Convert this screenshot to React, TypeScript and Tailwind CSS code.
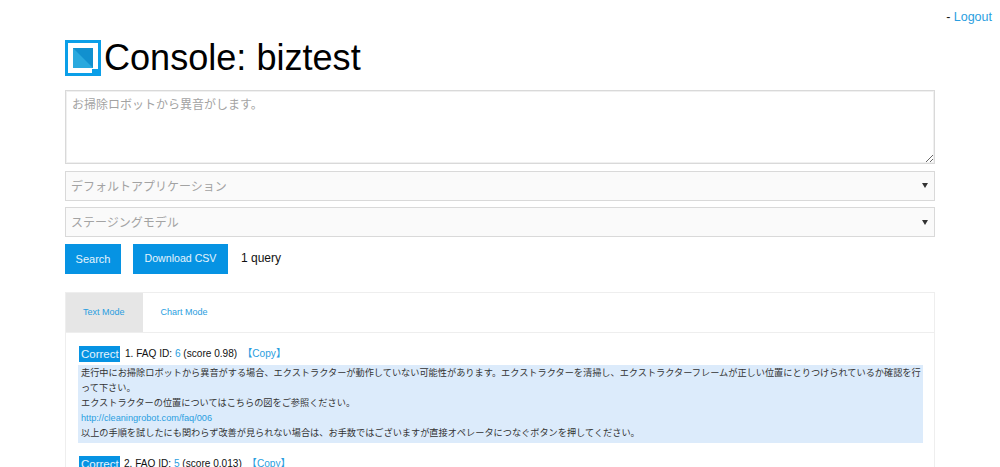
export default function App() {
  const font = "[font-family:'Liberation_Sans','Noto_Sans_CJK_JP',sans-serif]";
  return (
    <div className={`h-[467px] overflow-hidden bg-white text-[#111] ${font}`}>
      <div className="flex justify-end pr-2 pt-[8px] text-[12.5px] leading-[18px] h-[40px]">
        <span>-&nbsp;<a className="text-[#2a9ee0]">Logout</a></span>
      </div>
      <div className="mx-[65px] flex flex-col">
        <h1 className="flex items-center gap-[3px] h-[36px] text-[36.1px] leading-[36px] font-normal text-black">
          <svg width="36" height="36" viewBox="0 0 36 36" className="shrink-0">
            <rect width="36" height="36" fill="#0b9fe8" />
            <rect x="3" y="3" width="30" height="30" fill="#fff" />
            <rect x="8" y="8" width="20" height="20" fill="#1190cf" />
            <path d="M8 8 L8 28 L28 28 Z" fill="#2aa9de" />
            <rect x="27" y="29" width="6" height="4" fill="#0b9fe8" />
          </svg>
          <span>Console: biztest</span>
        </h1>
        <textarea
          placeholder="お掃除ロボットから異音がします。"
          className="mt-[14px] h-[74px] w-full border border-[#d9d9d9] shadow-[inset_0_0_0_1px_#f0f0f0] bg-white px-[6px] py-[6px] text-[12px] leading-[16px] placeholder:text-[#a3a3a3] outline-none"
        />
        <div className="relative mt-[7px] h-[30px]">
          <select className="h-full w-full appearance-none border border-[#d9d9d9] bg-[#fafafa] px-[5px] pt-[1px] text-[12px] text-[#a3a3a3] rounded-none outline-none">
            <option>デフォルトアプリケーション</option>
          </select>
          <span className="absolute right-[7px] top-[12px] h-0 w-0 border-x-[3px] border-t-[5px] border-x-transparent border-t-[#333]" />
        </div>
        <div className="relative mt-[6px] h-[30px]">
          <select className="h-full w-full appearance-none border border-[#d9d9d9] bg-[#fafafa] px-[5px] pt-[1px] text-[12px] text-[#a3a3a3] rounded-none outline-none">
            <option>ステージングモデル</option>
          </select>
          <span className="absolute right-[7px] top-[13px] h-0 w-0 border-x-[3px] border-t-[5px] border-x-transparent border-t-[#333]" />
        </div>
        <div className="mt-[7px] flex items-center h-[30px]">
          <button className="h-full w-[56px] bg-[#0693e3] text-[11px] text-white/90">Search</button>
          <button className="ml-[12px] h-full w-[95px] bg-[#0693e3] text-[10.6px] text-white/90">Download CSV</button>
          <span className="ml-[13px] -mt-[2px] text-[12px] text-[#111]">1 query</span>
        </div>
        <div className="mt-[18px] border border-[#eeeeee] border-b-0">
          <div className="flex h-[40px] border-b border-[#eeeeee] text-[9px] text-[#2a9ee0]">
            <div className="flex items-center pl-[17px] pr-[18px] bg-[#e6e6e6]">Text Mode</div>
            <div className="flex items-center px-[18px]">Chart Mode</div>
          </div>
          <div className="px-[12px] pt-[13px]">
            <div className="flex items-center h-[16px] text-[10.1px] pl-[1px]">
              <span className="bg-[#0693e3] text-white/90 pl-[2px] h-[16px] w-[41px] leading-[17px] text-[11.5px]">Correct</span>
              <span className="ml-[5px]">1. FAQ ID: <a className="text-[#2a9ee0]">6</a> (score 0.98)</span>
              <a className="ml-[5px] text-[#2a9ee0]">【Copy】</a>
            </div>
            <div className="mt-[3px] -mr-[1px] bg-[#dcebfb] pl-[3px] pt-[1px] pb-[2px] text-[9.18px] leading-[15px] text-[#333]">
              <div>走行中にお掃除ロボットから異音がする場合、エクストラクターが動作していない可能性があります。エクストラクターを清掃し、エクストラクターフレームが正しい位置にとりつけられているか確認を行って下さい。</div>
              <div>エクストラクターの位置についてはこちらの図をご参照ください。</div>
              <div><a className="text-[#2a9ee0]">http://cleaningrobot.com/faq/006</a></div>
              <div>以上の手順を試したにも関わらず改善が見られない場合は、お手数ではございますが直接オペレータにつなぐボタンを押してください。</div>
            </div>
            <div className="mt-[13px] flex items-center h-[16px] text-[10.1px] pl-[1px]">
              <span className="bg-[#0693e3] text-white/90 pl-[2px] h-[16px] w-[41px] leading-[17px] text-[11.5px]">Correct</span>
              <span className="ml-[4px]">2. FAQ ID: <a className="text-[#2a9ee0]">5</a> (score 0.013)</span>
              <a className="ml-[5px] text-[#2a9ee0]">【Copy】</a>
            </div>
          </div>
        </div>
      </div>
    </div>
  );
}
